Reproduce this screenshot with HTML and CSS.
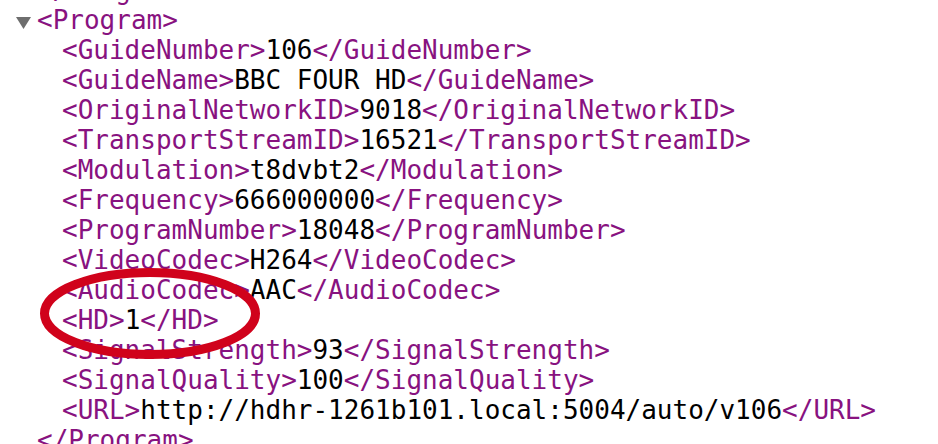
FILE: index.html
```html
<!DOCTYPE html>
<html>
<head>
<meta charset="utf-8">
<link rel="stylesheet" href="styles.css">
</head>
<body>
<div class="xml">
  <div class="line"><span class="tag">&lt;/Program&gt;</span></div>
  <div class="element">
    <div class="line opener"><svg class="arrow" width="15" height="12" viewBox="0 0 15 12"><polygon points="0,0 15,0 7.5,12" fill="#6e6e6e"/></svg><span class="tag">&lt;Program&gt;</span></div>
    <div class="children">
      <div class="line"><span class="tag">&lt;GuideNumber&gt;</span><span class="text">106</span><span class="tag">&lt;/GuideNumber&gt;</span></div>
      <div class="line"><span class="tag">&lt;GuideName&gt;</span><span class="text">BBC FOUR HD</span><span class="tag">&lt;/GuideName&gt;</span></div>
      <div class="line"><span class="tag">&lt;OriginalNetworkID&gt;</span><span class="text">9018</span><span class="tag">&lt;/OriginalNetworkID&gt;</span></div>
      <div class="line"><span class="tag">&lt;TransportStreamID&gt;</span><span class="text">16521</span><span class="tag">&lt;/TransportStreamID&gt;</span></div>
      <div class="line"><span class="tag">&lt;Modulation&gt;</span><span class="text">t8dvbt2</span><span class="tag">&lt;/Modulation&gt;</span></div>
      <div class="line"><span class="tag">&lt;Frequency&gt;</span><span class="text">666000000</span><span class="tag">&lt;/Frequency&gt;</span></div>
      <div class="line"><span class="tag">&lt;ProgramNumber&gt;</span><span class="text">18048</span><span class="tag">&lt;/ProgramNumber&gt;</span></div>
      <div class="line"><span class="tag">&lt;VideoCodec&gt;</span><span class="text">H264</span><span class="tag">&lt;/VideoCodec&gt;</span></div>
      <div class="line"><span class="tag">&lt;AudioCodec&gt;</span><span class="text">AAC</span><span class="tag">&lt;/AudioCodec&gt;</span></div>
      <div class="line"><span class="tag">&lt;HD&gt;</span><span class="text">1</span><span class="tag">&lt;/HD&gt;</span></div>
      <div class="line"><span class="tag">&lt;SignalStrength&gt;</span><span class="text">93</span><span class="tag">&lt;/SignalStrength&gt;</span></div>
      <div class="line"><span class="tag">&lt;SignalQuality&gt;</span><span class="text">100</span><span class="tag">&lt;/SignalQuality&gt;</span></div>
      <div class="line"><span class="tag">&lt;URL&gt;</span><span class="text">http://hdhr-1261b101.local:5004/auto/v106</span><span class="tag">&lt;/URL&gt;</span></div>
    </div>
    <div class="line"><span class="tag">&lt;/Program&gt;</span></div>
  </div>
</div>
<svg class="mark" width="240" height="110" viewBox="0 0 240 110">
  <ellipse cx="120" cy="54.5" rx="105.5" ry="41" fill="none" stroke="#d0021b" stroke-width="9"/>
</svg>
</body>
</html>
```
FILE: styles.css
```css
html, body {
  margin: 0;
  padding: 0;
  background: #ffffff;
  overflow: hidden;
}
body {
  position: relative;
  width: 938px;
  height: 444px;
}
.xml {
  margin-top: -25px;
  padding-left: 37px;
  font-family: "DejaVu Sans Mono", monospace;
  font-size: 26px;
  line-height: 30px;
  color: #000000;
}
.line {
  height: 30px;
  white-space: pre;
}
.opener {
  display: flex;
}
.arrow {
  flex: none;
  margin-left: -21px;
  margin-right: 6px;
  margin-top: 12px;
}
.children {
  padding-left: 25px;
}
.tag {
  color: #881280;
}
.text {
  color: #000000;
}
.mark {
  position: absolute;
  left: 30px;
  top: 259px;
}
```
